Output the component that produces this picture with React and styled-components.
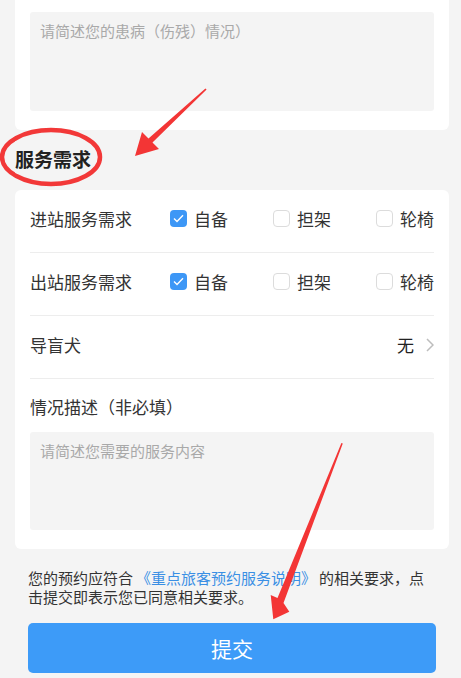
import React from "react";
import styled, { createGlobalStyle } from "styled-components";

const GlobalStyle = createGlobalStyle`
  html, body {
    margin: 0;
    padding: 0;
    background: #f4f4f4;
    font-family: "Noto Sans CJK SC", "Noto Sans", sans-serif;
    color: #333;
  }
`;

const Page = styled.div`
  position: relative;
  width: 461px;
  height: 678px;
  overflow: hidden;
  background: #f4f4f4;
`;

const Card = styled.div`
  width: 434px;
  margin-left: 15px;
  box-sizing: border-box;
  padding: ${(p) => (p.$cutTop ? "12px 15px 19px" : "0 15px 19px")};
  background: #fff;
  border-radius: ${(p) => (p.$cutTop ? "0 0 6px 6px" : "6px")};
`;

const TextBox = styled.textarea`
  display: block;
  width: 100%;
  height: ${(p) => p.$h}px;
  box-sizing: border-box;
  padding: 8px 10px;
  border: none;
  border-radius: 3px;
  background: #f4f4f4;
  resize: none;
  outline: none;
  font-family: inherit;
  font-size: 15px;
  line-height: 22px;
  color: #333;
  &::placeholder {
    color: #a9a9a9;
  }
`;

const SectionTitle = styled.h2`
  margin: 0;
  padding: 18px 15px 20px;
  font-size: 19px;
  line-height: 22px;
  font-weight: 700;
  color: #222;
`;

const Row = styled.div`
  display: flex;
  align-items: center;
  height: 63px;
  box-sizing: border-box;
  padding-bottom: 5px;
  border-bottom: 1px solid #ededed;
  font-size: 17px;
`;

const Label = styled.div`
  flex: 0 0 140px;
  color: #333;
`;

const Options = styled.div`
  flex: 1;
  display: flex;
  justify-content: space-between;
`;

const Option = styled.label`
  display: flex;
  align-items: center;
  gap: 7px;
  color: #333;
`;

const Box = styled.span`
  display: flex;
  align-items: center;
  justify-content: center;
  width: 17px;
  height: 17px;
  box-sizing: border-box;
  border-radius: 4px;
  background: ${(p) => (p.$checked ? "#3d97f6" : "#fff")};
  border: ${(p) => (p.$checked ? "none" : "1px solid #dcdcdc")};
`;

const Value = styled.div`
  margin-left: auto;
  display: flex;
  align-items: center;
  gap: 12px;
  color: #222;
`;

const FieldLabel = styled.div`
  padding: 16px 0 13px;
  font-size: 17px;
  line-height: 24px;
  color: #333;
`;

const Notice = styled.p`
  margin: 19px 0 0;
  padding: 0 30px 0 28px;
  font-size: 15px;
  line-height: 19px;
  color: #333;
`;

const Link = styled.span`
  margin: 0 3px;
  color: #3a8fe4;
`;

const SubmitButton = styled.button`
  display: block;
  width: 408px;
  height: 50px;
  margin: 17px 0 0 28px;
  border: none;
  border-radius: 5px;
  background: #3d9bf8;
  color: #fff;
  font-family: inherit;
  font-size: 21px;
`;

const Marks = styled.svg`
  position: absolute;
  left: 0;
  top: 0;
  pointer-events: none;
`;

const Check = () => (
  <svg width="11" height="9" viewBox="0 0 11 9">
    <path d="M1 4.6 L4 7.4 L10 1.3" fill="none" stroke="#fff" strokeWidth="1.4" />
  </svg>
);

const Chevron = () => (
  <svg width="8" height="14" viewBox="0 0 8 14">
    <path d="M1 1 L7 7 L1 13" fill="none" stroke="#bdbdbd" strokeWidth="1.5" />
  </svg>
);

const choices = ["自备", "担架", "轮椅"];

const ServiceRow = ({ title, picked }) => (
  <Row>
    <Label>{title}</Label>
    <Options>
      {choices.map((c) => (
        <Option key={c}>
          <Box $checked={c === picked}>{c === picked && <Check />}</Box>
          {c}
        </Option>
      ))}
    </Options>
  </Row>
);

export default function App() {
  return (
    <>
      <GlobalStyle />
      <Page>
        <Card $cutTop>
          <TextBox $h={99} placeholder="请简述您的患病（伤残）情况）" />
        </Card>

        <SectionTitle>服务需求</SectionTitle>

        <Card>
          <ServiceRow title="进站服务需求" picked="自备" />
          <ServiceRow title="出站服务需求" picked="自备" />
          <Row>
            <Label>导盲犬</Label>
            <Value>
              无
              <Chevron />
            </Value>
          </Row>
          <FieldLabel>情况描述（非必填）</FieldLabel>
          <TextBox $h={98} placeholder="请简述您需要的服务内容" />
        </Card>

        <Notice>
          您的预约应符合<Link>《重点旅客预约服务说明》</Link>的相关要求，点击提交即表示您已同意相关要求。
        </Notice>

        <SubmitButton>提交</SubmitButton>

        {/* red annotations drawn over the screenshot */}
        <Marks width="461" height="678" viewBox="0 0 461 678">
          <ellipse cx="51" cy="157" rx="49" ry="27" fill="none" stroke="#f23838" strokeWidth="4.5" />
          <polygon
            fill="#f33535"
            points="205.4,88.4 148.5,138.5 142,132 135,156 159,149 152.5,142.5 206.6,89.6"
          />
          <polygon
            fill="#f33535"
            points="341.4,443 277.5,598 270.7,595 273.3,619.3 289.3,611.7 283.5,603 342.8,443.4"
          />
        </Marks>
      </Page>
    </>
  );
}
